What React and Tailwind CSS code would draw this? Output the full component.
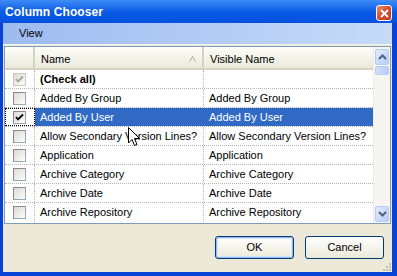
import React from 'react';

const rows = [
    'Added By Group',
    'Added By User',
    'Allow Secondary Version Lines?',
    'Application',
    'Archive Category',
    'Archive Date',
    'Archive Repository',
];

const CheckBox = ({ checked, disabled }) => {
    return (
        <div className={`w-[13px] h-[13px] border ${disabled ? 'border-[#cac8bb]' : 'border-[#1c5180]/40 border-t-[#8c8a80] border-l-[#8c8a80]'} bg-gradient-to-br from-[#dcdad3] to-[#fdfdfb] flex items-center justify-center`}>
            {checked && (
                <svg width="9" height="9" viewBox="0 0 9 9">
                    <path d="M1 4 L3 6.5 L8 1.5" fill="none" stroke={disabled ? '#a6a498' : '#000'} strokeWidth="1.8" />
                </svg>
            )}
        </div>
    );
};

const Cursor = () => (
    <svg className="absolute left-[128px] top-[127px]" width="13" height="21" viewBox="0 0 13 21">
        <path d="M0.5 0.5 L0.5 16 L4 12.5 L6.5 18.5 L9 17.5 L6.5 11.5 L11.5 11.5 Z" fill="#fff" stroke="#000" strokeWidth="1" />
    </svg>
);

const App = () => {
    return (
        <div className="relative w-[397px] h-[276px] overflow-hidden bg-[#0842d6] flex flex-col text-[11px]" style={{ fontFamily: '"Liberation Sans", Arial, sans-serif' }}>
            {/* title bar */}
            <div className="h-[23px] shrink-0 flex items-center justify-between pl-[5px] pr-[5px] bg-gradient-to-b from-[#3d8cf7] via-[#0a5ae6] to-[#0651dd]">
                <span className="text-white font-bold text-[12px] tracking-[0.1px]">Column Chooser</span>
                <div className="w-[16px] h-[16px] mt-[3px] rounded-[3px] border border-white bg-gradient-to-br from-[#e98b6c] via-[#d8482a] to-[#c33b20] flex items-center justify-center">
                    <svg width="9" height="9" viewBox="0 0 9 9">
                        <path d="M1 1 L8 8 M8 1 L1 8" stroke="#fff" strokeWidth="2" />
                    </svg>
                </div>
            </div>

            <div className="flex-1 mx-[3px] mb-[4px] mr-[5px] bg-[#ece9d8] flex flex-col">
                {/* menu bar */}
                <div className="h-[22px] shrink-0 flex items-center pl-[16px] bg-gradient-to-r from-[#9dbbf0] to-[#c7dbf8] text-black border-b border-[#f4f3ee]">
                    View
                </div>

                {/* grid */}
                <div className="mx-[1px] mt-[1px] h-[178px] border border-[#7f9db9] bg-white flex">
                    <div className="flex-1 flex flex-col">
                        <div className="h-[23px] flex bg-gradient-to-b from-[#fdfdfb] to-[#ebeadb] border-b-[2px] border-[#d6d2c2] pt-[3px]">
                            <div className="w-[30px] border-r-2 border-[#d6d2c2] -mt-[3px]"></div>
                            <div className="w-[169px] flex items-center justify-between pl-[6px] pr-[6px] border-r-2 border-[#d6d2c2] -mt-[3px] pt-[3px]">
                                <span>Name</span>
                                <svg width="7" height="6" viewBox="0 0 7 6">
                                    <path d="M0.5 5.5 L3.5 0.5 L6.5 5.5" fill="none" stroke="#aca899" strokeWidth="1" />
                                </svg>
                            </div>
                            <div className="flex-1 flex items-center pl-[6px]">Visible Name</div>
                        </div>
                        <div className="h-[19px] flex border-b border-dotted border-[#b5b5b5]">
                            <div className="w-[30px] flex items-center justify-center border-r border-dotted border-[#b5b5b5]">
                                <CheckBox checked disabled />
                            </div>
                            <div className="w-[169px] flex items-center pl-[5px] font-bold border-r border-dotted border-[#b5b5b5]">(Check all)</div>
                            <div className="flex-1"></div>
                        </div>
                        {rows.map((r, i) => {
                            const sel = r === 'Added By User';
                            return (
                                <div key={r} className={`h-[19px] flex shrink-0 ${i < rows.length - 1 ? 'border-b border-dotted border-[#b5b5b5]' : ''}`}>
                                    <div className={`w-[30px] flex items-center justify-center border-r border-dotted border-[#b5b5b5] ${sel ? 'outline outline-1 outline-dotted outline-black -outline-offset-1' : ''}`}>
                                        <CheckBox checked={sel} />
                                    </div>
                                    <div className={`w-[169px] flex items-center pl-[5px] whitespace-nowrap overflow-hidden border-r border-dotted ${sel ? 'bg-[#316ac5] text-white border-[#316ac5]' : 'border-[#b5b5b5]'}`}>{r}</div>
                                    <div className={`flex-1 flex items-center pl-[5px] whitespace-nowrap overflow-hidden ${sel ? 'bg-[#316ac5] text-white' : ''}`}>{r}</div>
                                </div>
                            );
                        })}
                    </div>
                    {/* scrollbar */}
                    <div className="w-[17px] bg-[#f6f5f1] flex flex-col border-l border-[#eeede5] pt-[2px] pb-[1px]">
                        <div className="h-[16px] mx-[1px] rounded-[2px] border border-[#b8cdf5] bg-gradient-to-br from-[#e2ebfd] to-[#b7cdf7] flex items-center justify-center">
                            <svg width="9" height="6" viewBox="0 0 9 6">
                                <path d="M1 5 L4.5 1.5 L8 5" fill="none" stroke="#4d6185" strokeWidth="2" />
                            </svg>
                        </div>
                        <div className="h-[9px] mx-[1px] mt-[1px] rounded-[2px] border border-[#b8cdf5] bg-gradient-to-r from-[#cddcfb] to-[#b9cff8]"></div>
                        <div className="flex-1"></div>
                        <div className="h-[16px] mx-[1px] rounded-[2px] border border-[#b8cdf5] bg-gradient-to-br from-[#e2ebfd] to-[#b7cdf7] flex items-center justify-center">
                            <svg width="9" height="6" viewBox="0 0 9 6">
                                <path d="M1 1 L4.5 4.5 L8 1" fill="none" stroke="#4d6185" strokeWidth="2" />
                            </svg>
                        </div>
                    </div>
                </div>

                {/* buttons */}
                <div className="flex-1 flex justify-end items-start pt-[12px] pr-[8px] gap-[11px] relative">
                    <button className="w-[79px] h-[23px] rounded-[3px] border border-[#003c74] bg-gradient-to-b from-[#ffffff] to-[#ece9d8] shadow-[inset_0_0_0_1px_#9db9eb,inset_0_0_0_2px_#cee7ff]">OK</button>
                    <button className="w-[79px] h-[23px] rounded-[3px] border border-[#003c74] bg-gradient-to-b from-[#ffffff] to-[#ece9d8]">Cancel</button>
                    <svg className="absolute right-[0px] bottom-[0px]" width="10" height="10" viewBox="0 0 10 10">
                        <rect x="7" y="1" width="2" height="2" fill="#c5c2b2" />
                        <rect x="4" y="4" width="2" height="2" fill="#c5c2b2" />
                        <rect x="7" y="4" width="2" height="2" fill="#c5c2b2" />
                        <rect x="1" y="7" width="2" height="2" fill="#c5c2b2" />
                        <rect x="4" y="7" width="2" height="2" fill="#c5c2b2" />
                        <rect x="7" y="7" width="2" height="2" fill="#c5c2b2" />
                    </svg>
                </div>
            </div>
            <Cursor />
        </div>
    );
};

export default App;
